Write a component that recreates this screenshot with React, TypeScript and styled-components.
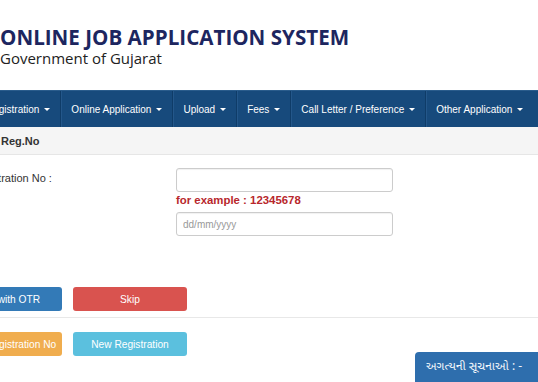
import React from "react";
import styled, { createGlobalStyle } from "styled-components";

const GlobalStyle = createGlobalStyle`
  html, body {
    margin: 0;
    padding: 0;
    background: #fff;
    overflow: hidden;
  }
  body {
    font-family: "Liberation Sans", Arial, sans-serif;
    color: #333;
  }
`;

const Page = styled.div`
  width: 538px;
  height: 382px;
  overflow: hidden;
  position: relative;
`;

const Header = styled.header`
  height: 90px;
  box-sizing: border-box;
  padding-top: 24px;
`;

const Title = styled.h1`
  margin: 0;
  font-family: "Open Sans", sans-serif;
  font-weight: 700;
  font-size: 20.6px;
  line-height: 26px;
  color: #1d2660;
  white-space: nowrap;
`;

const SubTitle = styled.div`
  font-family: "Open Sans", sans-serif;
  font-size: 15px;
  line-height: 17px;
  color: #222;
`;

const Nav = styled.nav`
  display: flex;
  height: 37px;
  margin-left: -24px;
  background: #174a7c;
  border-top: 1px solid #2a5c8c;
  box-sizing: border-box;
`;

const NavItem = styled.div`
  display: flex;
  align-items: center;
  gap: 3px;
  padding: 0 10px;
  color: #fff;
  font-size: 10px;
  white-space: nowrap;
  border-right: 1px solid #0f3c68;
  box-shadow: 1px 0 0 #24578a;
  &:last-child {
    padding-right: 24px;
  }
`;

const Caret = styled.span`
  display: inline-block;
  width: 0;
  height: 0;
  border-left: 3px solid transparent;
  border-right: 3px solid transparent;
  border-top: 3px solid #fff;
  margin-left: 2px;
`;

const PanelHeading = styled.div`
  height: 27px;
  display: flex;
  align-items: center;
  padding-left: 1px;
  background: #f5f5f5;
  border-bottom: 1px solid #e6e6e6;
  font-size: 11px;
  font-weight: 700;
  color: #333;
`;

const Form = styled.div`
  margin-left: -52px;
  padding-top: 13px;
`;

const FieldRow = styled.div`
  display: grid;
  grid-template-columns: 228px 217px;
`;

const Label = styled.label`
  padding-left: 22px;
  padding-top: 4px;
  font-size: 11px;
  color: #333;
`;

const Fields = styled.div`
  display: flex;
  flex-direction: column;
`;

const Input = styled.input`
  height: 24px;
  box-sizing: border-box;
  border: 1px solid #ccc;
  border-radius: 3px;
  padding: 0 6px;
  font-family: "Liberation Sans", Arial, sans-serif;
  font-size: 10px;
  box-shadow: inset 0 1px 1px rgba(0, 0, 0, 0.06);
  &::placeholder {
    color: #999;
  }
`;

const Hint = styled.div`
  height: 20px;
  line-height: 16px;
  font-size: 11.4px;
  font-weight: 700;
  color: #b8272c;
`;

const ButtonRow = styled.div<{ $top: number }>`
  display: flex;
  gap: 11px;
  margin-top: ${(p) => p.$top}px;
`;

const Button = styled.button<{ $bg: string }>`
  width: 114px;
  height: 24px;
  border: none;
  border-radius: 3px;
  background: ${(p) => p.$bg};
  color: #fff;
  font-family: "Liberation Sans", Arial, sans-serif;
  font-size: 10.2px;
  white-space: nowrap;
  padding: 0;
`;

const Divider = styled.div`
  height: 1px;
  background: #e8e8e8;
  margin-top: 6px;
  margin-left: 52px;
`;

const NoticeTab = styled.div`
  position: absolute;
  right: 0;
  bottom: 0;
  width: 123px;
  height: 30px;
  box-sizing: border-box;
  padding-left: 11px;
  display: flex;
  align-items: center;
  background: #2e6ead;
  border-radius: 4px 0 0 0;
  color: #f2f6fb;
  font-family: "Noto Sans Gujarati", "Noto Sans", "DejaVu Sans", sans-serif;
  font-size: 12px;
  white-space: nowrap;
`;

const menu = [
  "Registration",
  "Online Application",
  "Upload",
  "Fees",
  "Call Letter / Preference",
  "Other Application",
];

export default function App() {
  return (
    <Page>
      <GlobalStyle />
      <Header>
        <Title>ONLINE JOB APPLICATION SYSTEM</Title>
        <SubTitle>Government of Gujarat</SubTitle>
      </Header>
      <Nav>
        {menu.map((m) => (
          <NavItem key={m}>
            {m}
            <Caret />
          </NavItem>
        ))}
      </Nav>
      <PanelHeading>Reg.No</PanelHeading>
      <Form>
        <FieldRow>
          <Label>Registration No :</Label>
          <Fields>
            <Input type="text" />
            <Hint>for example : 12345678</Hint>
            <Input type="text" placeholder="dd/mm/yyyy" />
          </Fields>
        </FieldRow>
        <ButtonRow $top={51}>
          <Button $bg="#337ab7">Login with OTR</Button>
          <Button $bg="#d9534f">Skip</Button>
        </ButtonRow>
        <Divider />
        <ButtonRow $top={14}>
          <Button $bg="#f0ad4e">Forgot Registration No</Button>
          <Button $bg="#5bc0de">New Registration</Button>
        </ButtonRow>
      </Form>
      <NoticeTab>અગત્યની સૂચનાઓ : -</NoticeTab>
    </Page>
  );
}
